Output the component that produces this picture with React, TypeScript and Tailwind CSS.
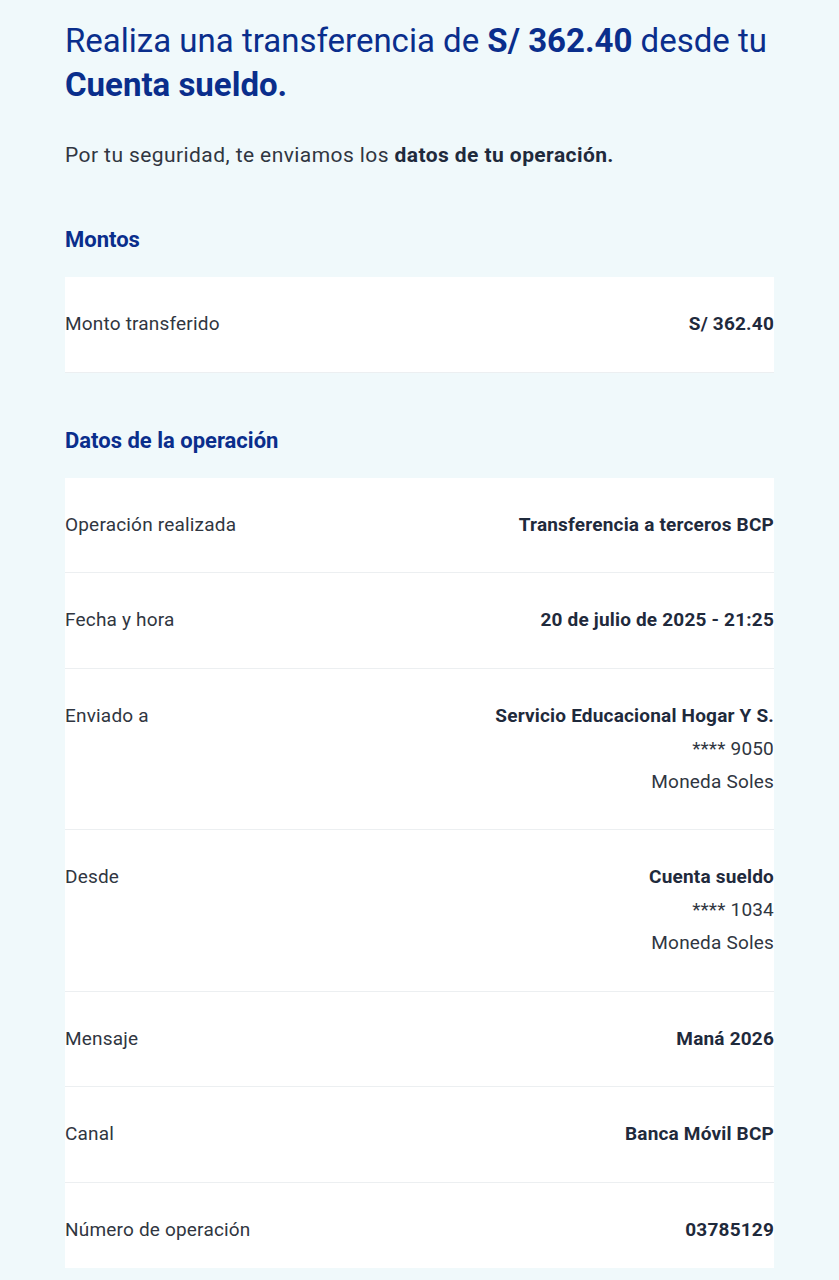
import React from 'react';

type Row = {
  label: string;
  lines: string[];
};

const operacion: Row[] = [
  { label: 'Operación realizada', lines: ['Transferencia a terceros BCP'] },
  { label: 'Fecha y hora', lines: ['20 de julio de 2025 - 21:25'] },
  { label: 'Enviado a', lines: ['Servicio Educacional Hogar Y S.', '**** 9050', 'Moneda Soles'] },
  { label: 'Desde', lines: ['Cuenta sueldo', '**** 1034', 'Moneda Soles'] },
  { label: 'Mensaje', lines: ['Maná 2026'] },
  { label: 'Canal', lines: ['Banca Móvil BCP'] },
  { label: 'Número de operación', lines: ['03785129'] },
];

function DataRow({ row, last }: { row: Row; last?: boolean }) {
  return (
    <div
      className={
        'flex justify-between gap-6 pt-[30px] text-[19px] leading-[33px] tracking-[0.01em] ' +
        (last ? 'pb-[22px]' : 'pb-[31.5px] border-b border-[#eceff1]')
      }
    >
      <span className="text-[#303641]">{row.label}</span>
      <div className="flex flex-col items-end text-right">
        {row.lines.map((line, i) => (
          <span key={i} className={i === 0 ? 'font-bold text-[#1f2a3c]' : 'text-[#303641]'}>
            {line}
          </span>
        ))}
      </div>
    </div>
  );
}

export default function App() {
  return (
    <div className="min-h-[1280px] bg-[#f0f9fb] px-[65px] pt-[19px] font-['Roboto',sans-serif]">
      <h1 className="text-[33px] leading-[44px] text-[#0a2e8c]">
        Realiza una transferencia de <b>S/ 362.40</b> desde tu <b>Cuenta sueldo.</b>
      </h1>

      <p className="mt-[34px] text-[21px] leading-[28px] tracking-[0.02em] text-[#303641]">
        Por tu seguridad, te enviamos los <b className="text-[#1f2a3c]">datos de tu operación.</b>
      </p>

      <h2 className="mt-[57px] text-[22px] leading-[28px] font-bold text-[#0a2e8c]">Montos</h2>
      <div className="mt-[23px] bg-white">
        <DataRow row={{ label: 'Monto transferido', lines: ['S/ 362.40'] }} />
      </div>

      <h2 className="mt-[54px] text-[22px] leading-[28px] font-bold text-[#0a2e8c]">
        Datos de la operación
      </h2>
      <div className="mt-[23px] bg-white">
        {operacion.map((row, i) => (
          <DataRow key={row.label} row={row} last={i === operacion.length - 1} />
        ))}
      </div>
    </div>
  );
}
